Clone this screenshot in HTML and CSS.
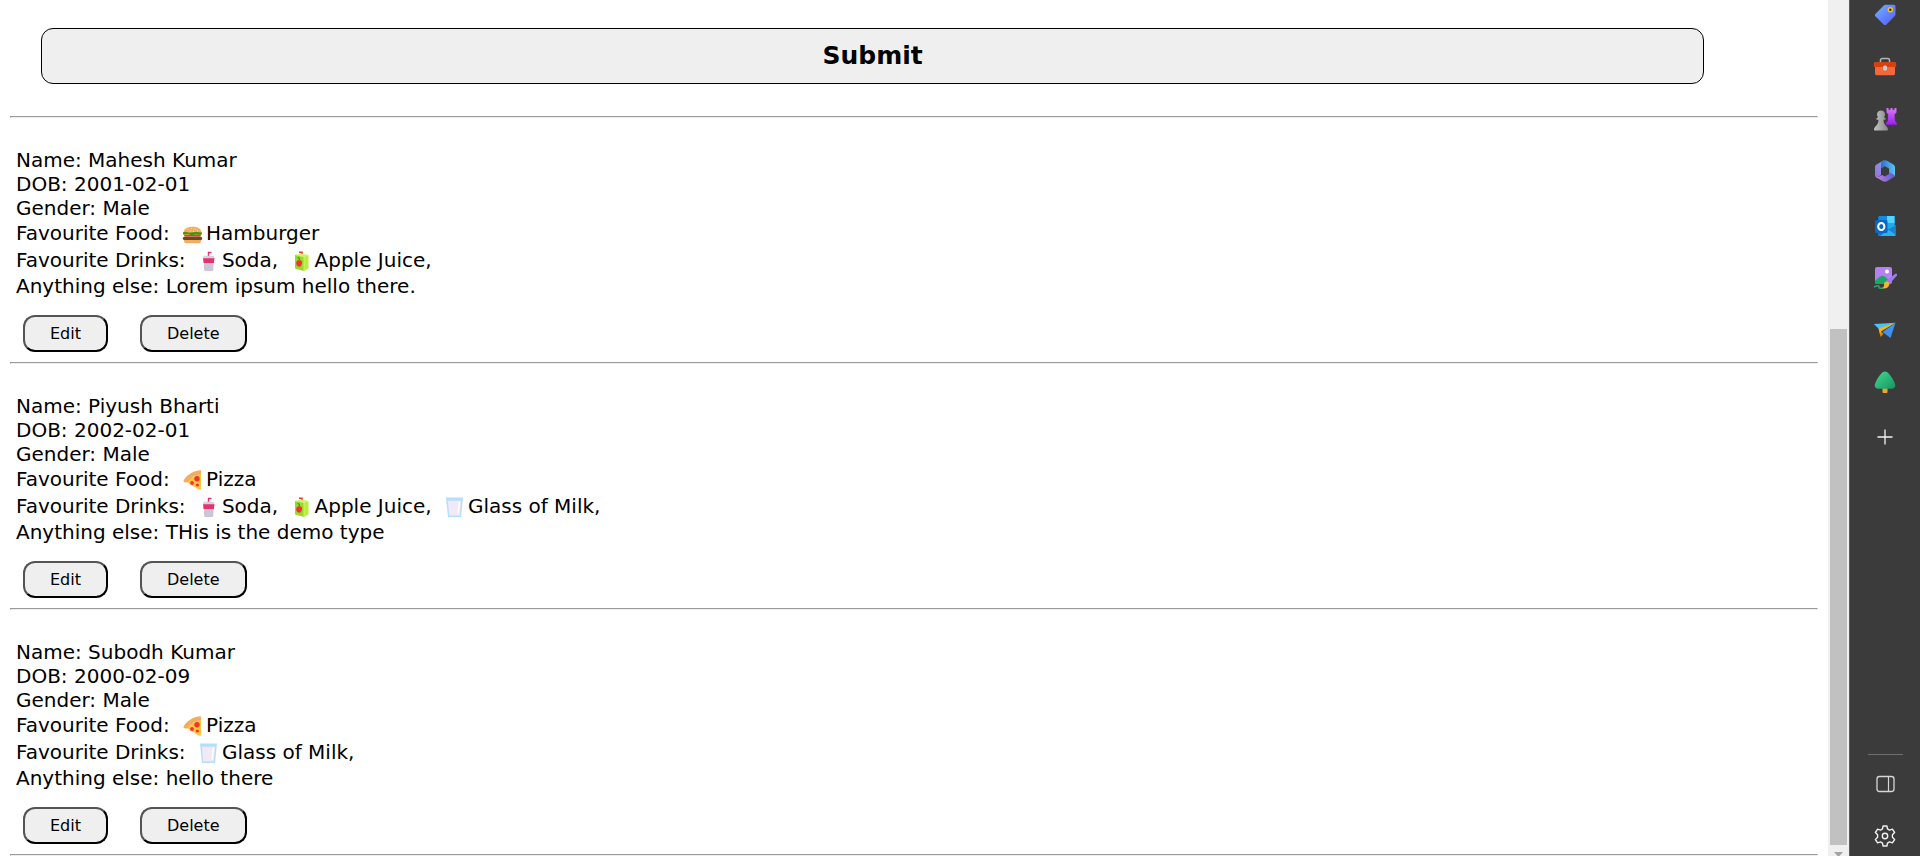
FILE: index.html
```html
<!DOCTYPE html>
<html lang="en">
<head>
<meta charset="utf-8">
<title>Food Form</title>
<link rel="stylesheet" href="styles.css">
</head>
<body>
<svg class="sprite" aria-hidden="true">
  <defs>
    <symbol id="burger" viewBox="0 0 27 20">
      <path d="M4.500 9C4.500 5 7.500 2.700 13.500 2.700S22.500 5 22.500 9Z" fill="#f3ad61"/>
      <g fill="#ffe3b0"><circle cx="9" cy="5.500" r=".6"/><circle cx="12.500" cy="4.300" r=".6"/><circle cx="16" cy="5" r=".6"/><circle cx="11.500" cy="7" r=".6"/><circle cx="18.500" cy="6.800" r=".6"/><circle cx="14.500" cy="7.200" r=".6"/></g>
      <rect x="5" y="9.500" width="17" height="3" fill="#ffb52e"/>
      <path d="M5 11h17l-1 1.500H6Z" fill="#f8312f"/>
      <path d="M4 8.500c3-1.200 5 .6 8 0s6-1 11 0v1.700c-3 1.300-4 0-6.500.3s-3 1.200-6 .2S7 11.200 4 10.200Z" fill="#44911b"/>
      <rect x="3.800" y="12.700" width="19.400" height="3.300" rx="1.600" fill="#6d4534"/>
      <path d="M5 16h17v1c0 1.600-1 2.300-2.500 2.300h-12C6 19.300 5 18.600 5 17Z" fill="#f3ad61"/>
    </symbol>
    <symbol id="pizza" viewBox="0 0 27 20">
      <path d="M22 3v16.500c-1 .6-2 .2-3-.3L6.500 11Z" fill="#ffc83d"/>
      <path d="M22 .3V4c-5 .7-10 3.500-13.500 8.300-1 .7-3.500 0-4.200-1C7 5.500 14 .5 22 .3Z" fill="#f3ad61"/>
      <g fill="#f8312f"><circle cx="18" cy="8.700" r="2.700"/><circle cx="13" cy="13" r="1.900"/><circle cx="18.400" cy="15" r="1.600"/></g>
    </symbol>
    <symbol id="soda" viewBox="0 0 27 20">
      <path d="M13.500 5V1.500h3" fill="none" stroke="#e6316c" stroke-width="1.400"/>
      <path d="M8.500 8h10.500l-.8 11c0 .6-.5 1-1 1h-7c-.5 0-.9-.4-1-1Z" fill="#cdc4d6"/>
      <path d="M8 7h11.500l-.6 5H8.600Z" fill="#e6316c"/>
      <path d="M9 4.800h9.500l1.300 2.400H7.700Z" fill="#d8cfe0"/>
    </symbol>
    <symbol id="juice" viewBox="0 0 27 20">
      <path d="M14 4V1.200h-3" fill="none" stroke="#f8312f" stroke-width="1.600"/>
      <path d="M7 4l6.500-1.500L20.500 4 16 6Z" fill="#d3f063"/>
      <path d="M7 4l9 2v14l-9-2.500Z" fill="#8fdc2c"/>
      <path d="M16 6l4.500-2v13.500L16 20Z" fill="#b9ee3f"/>
      <path d="M16 6v14" stroke="#d8f86e" stroke-width=".8"/>
      <path d="M9.500 6.500c1.800 0 2 1 2 2.500" stroke="#44911b" stroke-width="1.100" fill="none"/>
      <path d="M11 9.300c2.600-.5 3.400 1 3 3.300-.4 2.500-1.700 3.500-3.300 3-1.900-.4-2.800-2.400-2.400-4.300.2-1.400 1.400-2.200 2.700-2Z" fill="#f8312f"/>
    </symbol>
    <symbol id="milk" viewBox="0 0 27 20">
      <path d="M5 .5h17L20 20H7Z" fill="#b4defb"/>
      <path d="M6.800 3.800h13.400L18.800 18.600H8.200Z" fill="#f1e9f8"/>
      <path d="M18.300 4.500l-1.200 12" stroke="#fff" stroke-width="1.300"/>
    </symbol>
  </defs>
</svg>
<div class="window">
  <main class="page">
    <button class="submit" type="submit">Submit</button>
    <hr>
    <section class="entry">
      <div class="details">
        <p>Name: Mahesh Kumar</p>
        <p>DOB: 2001-02-01</p>
        <p>Gender: Male</p>
        <p class="choices">Favourite Food: <svg class="emoji"><use href="#burger"/></svg>Hamburger</p>
        <p class="choices">Favourite Drinks: <svg class="emoji"><use href="#soda"/></svg>Soda, <svg class="emoji"><use href="#juice"/></svg>Apple Juice,</p>
        <p>Anything else: Lorem ipsum hello there.</p>
      </div>
      <div class="actions"><button type="button">Edit</button><button type="button">Delete</button></div>
    </section>
    <hr>
    <section class="entry">
      <div class="details">
        <p>Name: Piyush Bharti</p>
        <p>DOB: 2002-02-01</p>
        <p>Gender: Male</p>
        <p class="choices">Favourite Food: <svg class="emoji"><use href="#pizza"/></svg>Pizza</p>
        <p class="choices">Favourite Drinks: <svg class="emoji"><use href="#soda"/></svg>Soda, <svg class="emoji"><use href="#juice"/></svg>Apple Juice, <svg class="emoji"><use href="#milk"/></svg>Glass of Milk,</p>
        <p>Anything else: THis is the demo type</p>
      </div>
      <div class="actions"><button type="button">Edit</button><button type="button">Delete</button></div>
    </section>
    <hr>
    <section class="entry">
      <div class="details">
        <p>Name: Subodh Kumar</p>
        <p>DOB: 2000-02-09</p>
        <p>Gender: Male</p>
        <p class="choices">Favourite Food: <svg class="emoji"><use href="#pizza"/></svg>Pizza</p>
        <p class="choices">Favourite Drinks: <svg class="emoji"><use href="#milk"/></svg>Glass of Milk,</p>
        <p>Anything else: hello there</p>
      </div>
      <div class="actions"><button type="button">Edit</button><button type="button">Delete</button></div>
    </section>
    <hr>
  </main>

  <div class="scrollbar" aria-hidden="true">
    <div class="track-above"></div>
    <div class="thumb"></div>
    <svg class="arrow" viewBox="0 0 17 11"><path d="M4 7h9l-4.500 5Z" fill="#a3a3a3"/></svg>
  </div>

  <nav class="sidebar" aria-label="Sidebar">
    <div class="tools">
      <button type="button" aria-label="Shopping"><svg viewBox="0 0 24 24">
        <defs><linearGradient id="g-tag" x1="0" y1="0" x2="1" y2="1"><stop offset="0" stop-color="#6fb4ff"/><stop offset="1" stop-color="#5558ff"/></linearGradient></defs>
        <path d="M12.500 1.800h8.300c1 0 1.700.7 1.700 1.700v7.800c0 .7-.2 1.300-.7 1.800l-8.300 8.300c-.9.900-2 .9-2.900 0l-8-7.800c-.9-.9-.9-2 0-2.900l8.200-8.300c.5-.4 1-.6 1.700-.6Z" fill="url(#g-tag)"/>
        <circle cx="17.300" cy="6.800" r="2" fill="#332c20" stroke="#f5c211" stroke-width="1.500"/></svg></button>
      <button type="button" aria-label="Tools"><svg viewBox="0 0 24 24">
        <path d="M7.500 7V5.200c0-1 .7-1.700 1.700-1.700h5.600c1 0 1.700.7 1.700 1.700V7" fill="none" stroke="#b5b5b5" stroke-width="1.500"/>
        <path d="M2 11h20v7.500c0 1-.7 1.700-1.700 1.700H3.700c-1 0-1.700-.7-1.700-1.700Z" fill="#f0683c"/>
        <path d="M2.200 7h19.600c.8 0 1.400.6 1.400 1.400V12H.8V8.400C.8 7.600 1.400 7 2.200 7Z" fill="#d4410f"/>
        <rect x="10" y="10.500" width="4" height="5" rx="1.500" fill="#ccc"/></svg></button>
      <button type="button" aria-label="Games"><svg viewBox="0 0 24 24">
        <defs><linearGradient id="g-rook" x1="0" y1="0" x2="0" y2="1"><stop offset="0" stop-color="#d77bf5"/><stop offset="1" stop-color="#9c1bf0"/></linearGradient><linearGradient id="g-pawn"><stop offset="0" stop-color="#c4c4c4"/><stop offset="1" stop-color="#888"/></linearGradient></defs>
        <path d="M13.500 1h2v1.700h2V1h2v1.700h2V1h2v4.500l-2 2 .5 6.500 1.800 2v1.800H13V16l1.800-2 .5-6.500-1.800-2Z" fill="url(#g-rook)"/>
        <path d="M8 3.500a4 4 0 0 1 3 6.700l1.500 1v1.600h-2c0 3 1 5 3.500 7.200 1 .8 1.300 3.500.5 3.500H1.500C.7 23.500 1 20.800 2 20c2.500-2.200 3.500-4.200 3.500-7.200h-2v-1.600l1.500-1A4 4 0 0 1 8 3.500Z" fill="url(#g-pawn)"/></svg></button>
      <button type="button" aria-label="Microsoft 365"><svg viewBox="0 0 24 24">
        <defs><linearGradient id="g-m1" x1="0" y1="1" x2="1" y2="0"><stop offset="0" stop-color="#9a6fd6"/><stop offset="1" stop-color="#7ea4ef"/></linearGradient><linearGradient id="g-m2"><stop offset="0" stop-color="#2a6fc4"/><stop offset="1" stop-color="#5cc4fb"/></linearGradient><linearGradient id="g-m3"><stop offset="0" stop-color="#c684df"/><stop offset="1" stop-color="#5a5ccc"/></linearGradient></defs>
        <path d="M10.500 1.500 3.500 5.500C2.500 6 2 7 2 8.200V16c0 1.200.6 2 1.600 2.500L8 16V8.500l6-4.500Z" fill="url(#g-m1)"/>
        <path d="M9.500 2c1.700-1 3.300-1 5 0l5.500 3.300c1.300.8 2 1.800 2 3.300v7c0 .9-.3 1.500-.9 2.100L16 14.500v-5l-4-2.300-4 2V5c0-1.400.5-2.400 1.500-3Z" fill="url(#g-m2)"/>
        <path d="M2.500 17.500c2 .8 3.500.4 5.500-1l1-.5 3 1.500 4-2.500v-2l4.500 2.500c1.300.8 1.300 2 0 2.800l-6 3.700c-1.700 1-3.300 1-5 0l-5.500-3.300c-.6-.3-1.100-.7-1.500-1.200Z" fill="url(#g-m3)"/></svg></button>
    </div>
    <div class="tools">
      <button type="button" aria-label="Outlook"><svg viewBox="0 0 24 24">
        <path d="M6 2h16v20H5V3Z" fill="#1277ce"/><path d="M6 2h8v6H6Z" fill="#1689d8"/><path d="M14 2h7.500v7H14Z" fill="#55d4fb"/><path d="M6 8h8v7H6Z" fill="#0866bd"/><path d="M14 9h7.500v6H14Z" fill="#22a9e9"/>
        <path d="M22.500 11v11H7l8-6Z" fill="#2db1ee"/><path d="M15 15.500l7.500-4v9Z" fill="#1484d0"/>
        <rect x="2" y="6" width="12.500" height="13" rx="1.500" fill="#0868c7"/>
        <ellipse cx="8.300" cy="12.500" rx="3.100" ry="3.500" fill="none" stroke="#fff" stroke-width="2"/></svg></button>
      <button type="button" aria-label="Image Creator"><svg viewBox="0 0 24 24">
        <rect x="2" y="1" width="17" height="17" rx="2" fill="#b77ff5"/><circle cx="14" cy="5.500" r="2" fill="#fff"/>
        <path d="M2 15c3-3 6-6 8.500-5 2.500.8 4 3 6.500 6.500v1.500H4c-1.200 0-2-.8-2-2Z" fill="#1da765"/>
        <path d="M1 21c2-1 5-2 5-.5s-.5 2 4 1.500" fill="none" stroke="#20ad6a" stroke-width="1.500"/>
        <path d="m13 15 9-7c2-1 2.800.5 1.500 2l-7.500 8.500Z" fill="#9b7df0"/>
        <path d="M10.500 21c1-1 0-3 1.200-4.700 1.800-2 4.800-.2 4.600 2-.2 3-3.300 4.700-7.300 4.200Z" fill="#f8b52a"/></svg></button>
      <button type="button" aria-label="Drop"><svg viewBox="0 0 24 24">
        <path d="M.8 6 22.500 4.800 7 12Z" fill="#45c4f8"/><path d="M5.500 10.500 22.500 4.800 8 13.500 7.500 19Z" fill="#fbb513"/><path d="m8 13.500-.5 5.500 3-3Z" fill="#d48a0a"/><path d="M22.500 4.800 17.500 20 9.500 14Z" fill="#3f91f2"/></svg></button>
      <button type="button" aria-label="E-tree"><svg viewBox="0 0 24 24">
        <defs><linearGradient id="g-tree" x1="0" y1="0" x2="1" y2="1"><stop offset="0" stop-color="#43db91"/><stop offset="1" stop-color="#159462"/></linearGradient></defs>
        <rect x="9.500" y="17" width="5" height="6" rx="1" fill="#f6a317"/>
        <path d="M12 1.500c1.500 0 2.500.7 3.400 1.800C18 6 19.500 8.500 21 11.500l1 2.500c.9 2.500-.5 4.700-3.200 4.700H5.200C2.500 18.700 1.100 16.500 2 14l1-2.500C4.500 8.500 6 6 8.600 3.300 9.500 2.200 10.500 1.500 12 1.500Z" fill="url(#g-tree)"/></svg></button>
    </div>
    <div class="tools">
      <button type="button" aria-label="Customize"><svg viewBox="0 0 24 24"><path d="M4.500 12h15M12 4.500v15" fill="none" stroke="#f4f4f4" stroke-width="1.300"/></svg></button>
    </div>
    <div class="tools tools-end">
      <button type="button" aria-label="Hide sidebar"><svg viewBox="0 0 24 24"><rect x="4" y="4.500" width="17" height="15" rx="2.500" fill="none" stroke="#d6d6d6" stroke-width="1.300"/><path d="M15.500 4.500v15" stroke="#d6d6d6" stroke-width="1.200"/></svg></button>
      <button type="button" aria-label="Settings"><svg viewBox="0 0 24 24"><g fill="none" stroke="#f0f0f0" stroke-width="1.400" stroke-linejoin="round"><path d="M10.100 2h3.800l.6 2.900 2 1.200 2.900-.9 2.200 3.300-2.200 2.200v2.600l2.200 2.200-2.200 3.300-2.900-.9-2 1.200-.6 2.900h-3.800l-.6-2.900-2-1.200-2.900.9-2.200-3.300 2.200-2.200v-2.600L2.400 8.500l2.200-3.300 2.900.9 2-1.200Z"/><circle cx="12" cy="12" r="2.700"/></g></svg></button>
    </div>
  </nav>
</div>
</body>
</html>
```

FILE: styles.css
```css
* { box-sizing: border-box; }

body {
  margin: 0;
  background: #fff;
  color: #000;
  font-family: Verdana, "DejaVu Sans", sans-serif;
  font-size: 20px;
  line-height: 24px;
}

.sprite { position: absolute; width: 0; height: 0; }

.window {
  display: flex;
  height: 100vh;
  overflow: hidden;
}

/* Form page */
.page {
  flex: 1;
  min-width: 0;
  overflow: hidden;
  padding: 28px 10px 0;
}

.submit {
  display: block;
  width: 92%;
  margin: 0 0 32px 31px;
  padding: 14px;
  border: 1px solid #000;
  border-radius: 12px;
  background: #efefef;
  color: #000;
  font: bold 25px/26px Verdana, "DejaVu Sans", sans-serif;
}

hr {
  margin: 0;
  border: 1px solid;
  border-color: #9a9a9a #eee #eee #9a9a9a;
}

.entry { padding: 30px 6px 10px; }

.details p { margin: 0; }
.details .choices { line-height: 27px; }

.emoji {
  width: 27px;
  height: 20px;
  margin-left: 3px;
  vertical-align: -4px;
}

.actions {
  display: flex;
  gap: 32px;
  padding: 17px 7px 0;
}

.actions button {
  padding: 6px 25px;
  border: 2px outset #000;
  border-radius: 12px;
  background: #efefef;
  color: #000;
  font: 16px/21px Verdana, "DejaVu Sans", sans-serif;
}

/* Scrollbar */
.scrollbar {
  display: flex;
  flex-direction: column;
  width: 21px;
  padding: 0 2px;
  background: #f0f0f0;
}

.track-above { flex: 329; }
.thumb { flex: 516; background: #c1c1c1; }
.arrow { display: block; width: 17px; height: 11px; }

/* Browser sidebar */
.sidebar {
  display: flex;
  flex-direction: column;
  align-items: center;
  gap: 27px;
  width: 71px;
  padding: 1px 0 6px;
  border-left: 1px solid #5a5a5a;
  background: #3b3b3b;
}

.tools {
  display: flex;
  flex-direction: column;
  align-items: center;
  gap: 24px;
}

.tools button {
  display: grid;
  place-items: center;
  width: 35px;
  height: 28px;
  padding: 0;
  border: 0;
  background: none;
}

.tools svg { width: 24px; height: 24px; }

.tools-end {
  margin-top: auto;
  padding-top: 15px;
  border-top: 1px solid #6e6e6e;
}
```
